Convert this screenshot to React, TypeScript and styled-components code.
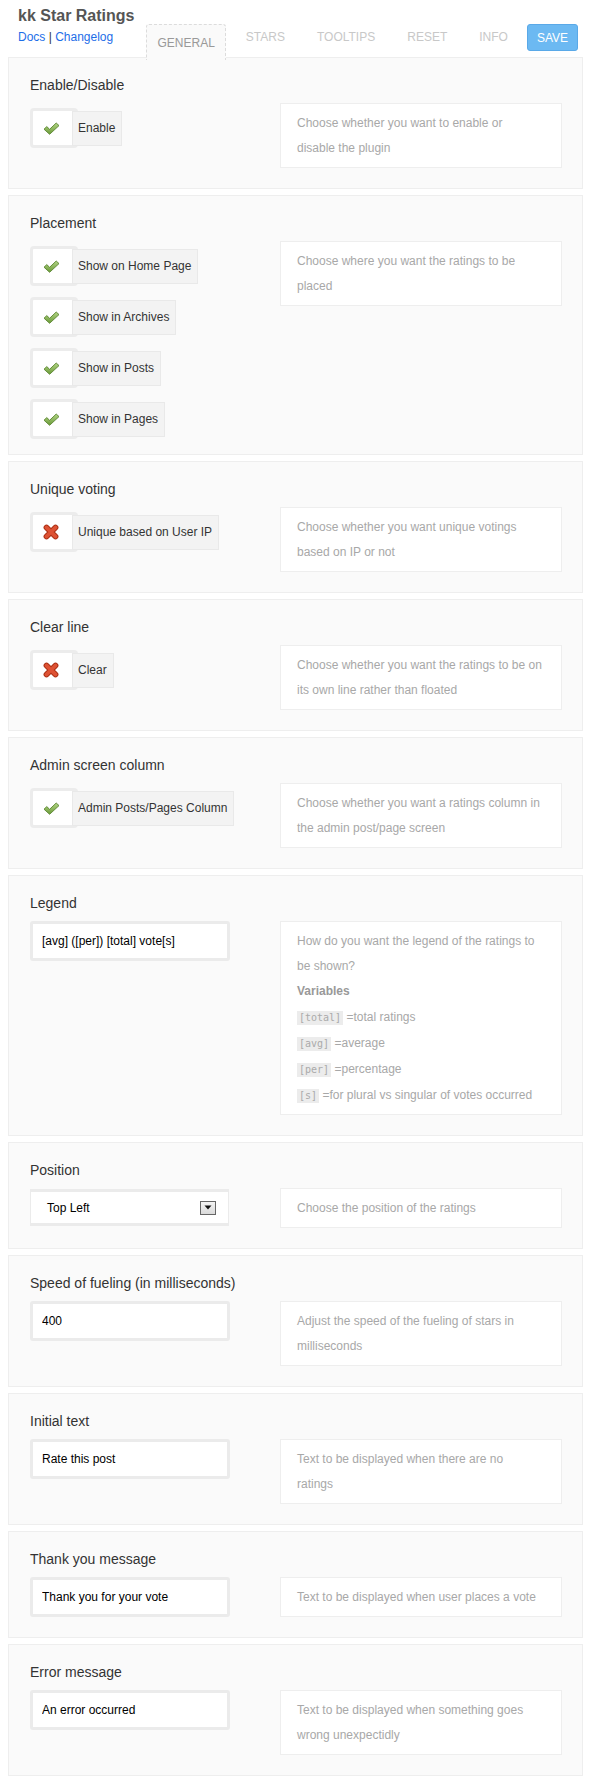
import React from 'react';
import styled, { createGlobalStyle } from 'styled-components';

type Check = { label: string; on: boolean };
type Control =
  | { kind: 'checks'; items: Check[] }
  | { kind: 'input'; value: string }
  | { kind: 'select'; value: string };
type Setting = { title: string; control: Control; desc: string[] | 'legend' };

const settings: Setting[] = [
  {
    title: 'Enable/Disable',
    control: { kind: 'checks', items: [{ label: 'Enable', on: true }] },
    desc: ['Choose whether you want to enable or', 'disable the plugin'],
  },
  {
    title: 'Placement',
    control: {
      kind: 'checks',
      items: [
        { label: 'Show on Home Page', on: true },
        { label: 'Show in Archives', on: true },
        { label: 'Show in Posts', on: true },
        { label: 'Show in Pages', on: true },
      ],
    },
    desc: ['Choose where you want the ratings to be', 'placed'],
  },
  {
    title: 'Unique voting',
    control: { kind: 'checks', items: [{ label: 'Unique based on User IP', on: false }] },
    desc: ['Choose whether you want unique votings', 'based on IP or not'],
  },
  {
    title: 'Clear line',
    control: { kind: 'checks', items: [{ label: 'Clear', on: false }] },
    desc: ['Choose whether you want the ratings to be on', 'its own line rather than floated'],
  },
  {
    title: 'Admin screen column',
    control: { kind: 'checks', items: [{ label: 'Admin Posts/Pages Column', on: true }] },
    desc: ['Choose whether you want a ratings column in', 'the admin post/page screen'],
  },
  {
    title: 'Legend',
    control: { kind: 'input', value: '[avg] ([per]) [total] vote[s]' },
    desc: 'legend',
  },
  {
    title: 'Position',
    control: { kind: 'select', value: 'Top Left' },
    desc: ['Choose the position of the ratings'],
  },
  {
    title: 'Speed of fueling (in milliseconds)',
    control: { kind: 'input', value: '400' },
    desc: ['Adjust the speed of the fueling of stars in', 'milliseconds'],
  },
  {
    title: 'Initial text',
    control: { kind: 'input', value: 'Rate this post' },
    desc: ['Text to be displayed when there are no', 'ratings'],
  },
  {
    title: 'Thank you message',
    control: { kind: 'input', value: 'Thank you for your vote' },
    desc: ['Text to be displayed when user places a vote'],
  },
  {
    title: 'Error message',
    control: { kind: 'input', value: 'An error occurred' },
    desc: ['Text to be displayed when something goes', 'wrong unexpectidly'],
  },
];

const variables = [
  ['[total]', '=total ratings'],
  ['[avg]', '=average'],
  ['[per]', '=percentage'],
  ['[s]', '=for plural vs singular of votes occurred'],
];

const tabs = ['GENERAL', 'STARS', 'TOOLTIPS', 'RESET', 'INFO'];

const CheckIcon = () => (
  <svg width="17" height="13" viewBox="0 0 17 13">
    <defs>
      <linearGradient id="tick" x1="0" y1="0" x2="0" y2="1">
        <stop offset="0" stopColor="#b2d585" />
        <stop offset="1" stopColor="#6a9a38" />
      </linearGradient>
    </defs>
    <path
      d="M1 7.2 L3.8 4.6 L6.6 7.3 L13.2 1 L16 3.6 L6.6 12.3 Z"
      fill="url(#tick)"
      stroke="#5a8430"
      strokeWidth="0.9"
      strokeLinejoin="round"
    />
  </svg>
);

const CrossIcon = () => (
  <svg width="16" height="16" viewBox="0 0 16 16">
    <path d="M3.5 3.5 L12.5 12.5 M12.5 3.5 L3.5 12.5" stroke="#ad3115" strokeWidth="5.8" strokeLinecap="round" />
    <path d="M3.5 3.5 L12.5 12.5 M12.5 3.5 L3.5 12.5" stroke="#de5234" strokeWidth="3.8" strokeLinecap="round" />
  </svg>
);

const App = () => {
  return (
    <Page>
      <GlobalStyle />
      <Header>
        <Brand>
          <Title>kk Star Ratings</Title>
          <Links>
            <a href="#docs">Docs</a> | <a href="#changelog">Changelog</a>
          </Links>
        </Brand>
        <Tabs>
          {tabs.map((t, i) => (
            <Tab key={t} $active={i === 0}>
              {t}
            </Tab>
          ))}
          <SaveButton>SAVE</SaveButton>
        </Tabs>
      </Header>
      <Panels>
        {settings.map((s) => (
          <Panel key={s.title}>
            <PanelTitle>{s.title}</PanelTitle>
            <Row>
              <div>
                {s.control.kind === 'checks' && (
                  <Checks>
                    {s.control.items.map((c) => (
                      <CheckItem key={c.label}>
                        <CheckFrame>{c.on ? <CheckIcon /> : <CrossIcon />}</CheckFrame>
                        <CheckLabel>{c.label}</CheckLabel>
                      </CheckItem>
                    ))}
                  </Checks>
                )}
                {s.control.kind === 'input' && <TextField type="text" defaultValue={s.control.value} />}
                {s.control.kind === 'select' && (
                  <SelectBox>
                    <span>{s.control.value}</span>
                    <ArrowBox>
                      <svg width="8" height="5" viewBox="0 0 8 5">
                        <path d="M0.5 0.5 H7.5 L4 4.5 Z" fill="#111" />
                      </svg>
                    </ArrowBox>
                  </SelectBox>
                )}
              </div>
              <Desc>
                {s.desc === 'legend' ? (
                  <>
                    <div>How do you want the legend of the ratings to</div>
                    <div>be shown?</div>
                    <VarTitle>Variables</VarTitle>
                    {variables.map(([code, text]) => (
                      <VarLine key={code}>
                        <Code>{code}</Code> {text}
                      </VarLine>
                    ))}
                  </>
                ) : (
                  s.desc.map((line) => <div key={line}>{line}</div>)
                )}
              </Desc>
            </Row>
          </Panel>
        ))}
      </Panels>
    </Page>
  );
};

export default App;

const GlobalStyle = createGlobalStyle`
  html, body {
    margin: 0;
    padding: 0;
    background: #fff;
  }
  body {
    font-family: "Liberation Sans", Arial, sans-serif;
    font-size: 12px;
    color: #333;
  }
`;

const Page = styled.div`
  width: 589px;
`;

const Header = styled.header`
  display: flex;
  height: 57px;
  padding-left: 18px;
  box-sizing: border-box;
`;

const Brand = styled.div`
  padding-top: 6px;
`;

const Title = styled.div`
  font-size: 16px;
  font-weight: bold;
  line-height: 20px;
  color: #555;
`;

const Links = styled.div`
  margin-top: 2px;
  font-size: 12px;
  line-height: 19px;
  color: #333;

  a {
    color: #1d6ee8;
    text-decoration: none;
  }
`;

const Tabs = styled.nav`
  display: flex;
  align-items: flex-start;
  margin-left: 12px;
  padding-top: 24px;
`;

const Tab = styled.div<{ $active?: boolean }>`
  padding: 0 16px;
  line-height: 27px;
  color: #c8c8c8;
  cursor: pointer;

  ${(p) =>
    p.$active &&
    `
    position: relative;
    z-index: 1;
    height: 36px;
    box-sizing: border-box;
    margin-right: 4px;
    padding: 9px 10px 0;
    line-height: 18px;
    color: #999;
    background: #fafafa;
    border: 1px dashed #dcdcdc;
    border-bottom: none;
    border-radius: 3px 3px 0 0;
  `}
`;

const SaveButton = styled.button`
  margin-left: 3px;
  height: 27px;
  padding: 0 9px;
  font-family: inherit;
  font-size: 12px;
  color: #fff;
  background: #6cb9f2;
  border: 1px solid #5aa9e8;
  border-radius: 3px;
  cursor: pointer;
`;

const Panels = styled.main`
  display: flex;
  flex-direction: column;
  gap: 6px;
  padding: 0 6px 6px 8px;
`;

const Panel = styled.section`
  background: #fafafa;
  border: 1px solid #eee;
  padding: 18px 20px 15px 21px;
`;

const PanelTitle = styled.h3`
  margin: 0 0 9px;
  font-size: 14px;
  font-weight: normal;
  line-height: 18px;
  color: #333;
`;

const Row = styled.div`
  display: grid;
  grid-template-columns: 1fr 282px;
  align-items: start;
`;

const Desc = styled.div`
  margin-bottom: 5px;
  padding: 7px 16px 6px;
  background: #fff;
  border: 1px solid #eee;
  line-height: 25px;
  color: #a8a8a8;
  white-space: nowrap;
`;

const VarTitle = styled.div`
  font-weight: bold;
  color: #999;
`;

const VarLine = styled.div`
  line-height: 26px;
`;

const Code = styled.code`
  display: inline-block;
  padding: 0 2px;
  font-family: "DejaVu Sans Mono", "Liberation Mono", monospace;
  font-size: 10px;
  line-height: 14px;
  vertical-align: middle;
  color: #aaa;
  background: #ececec;
`;

const Checks = styled.div`
  display: flex;
  flex-direction: column;
  align-items: flex-start;
  gap: 11px;
  padding-top: 5px;
`;

const CheckItem = styled.label`
  display: flex;
  align-items: center;
  height: 40px;
  cursor: pointer;
`;

const CheckFrame = styled.span`
  display: flex;
  align-items: center;
  justify-content: center;
  width: 48px;
  height: 40px;
  box-sizing: border-box;
  padding-right: 6px;
  background: #fff;
  border: 3px solid #ececec;
  border-radius: 4px;
`;

const CheckLabel = styled.span`
  height: 35px;
  box-sizing: border-box;
  margin-left: -6px;
  padding: 0 6px 0 5px;
  line-height: 33px;
  color: #333;
  background: #f3f3f3;
  border: 1px solid #e9e9e9;
`;

const TextField = styled.input`
  display: block;
  width: 200px;
  height: 40px;
  box-sizing: border-box;
  padding: 0 9px;
  font-family: inherit;
  font-size: 12px;
  color: #000;
  background: #fff;
  border: 3px solid #ebebeb;
  border-radius: 3px;
  outline: none;
`;

const SelectBox = styled.div`
  display: flex;
  align-items: center;
  justify-content: space-between;
  width: 199px;
  height: 37px;
  box-sizing: border-box;
  margin-top: 1px;
  padding: 0 12px 0 16px;
  color: #000;
  background: #fff;
  border-style: solid;
  border-color: #ebebeb;
  border-width: 3px 1px;
`;

const ArrowBox = styled.span`
  display: flex;
  align-items: center;
  justify-content: center;
  width: 16px;
  height: 14px;
  box-sizing: border-box;
  border: 1px solid #666;
  background: linear-gradient(#f4f4f4, #dadada);
`;
